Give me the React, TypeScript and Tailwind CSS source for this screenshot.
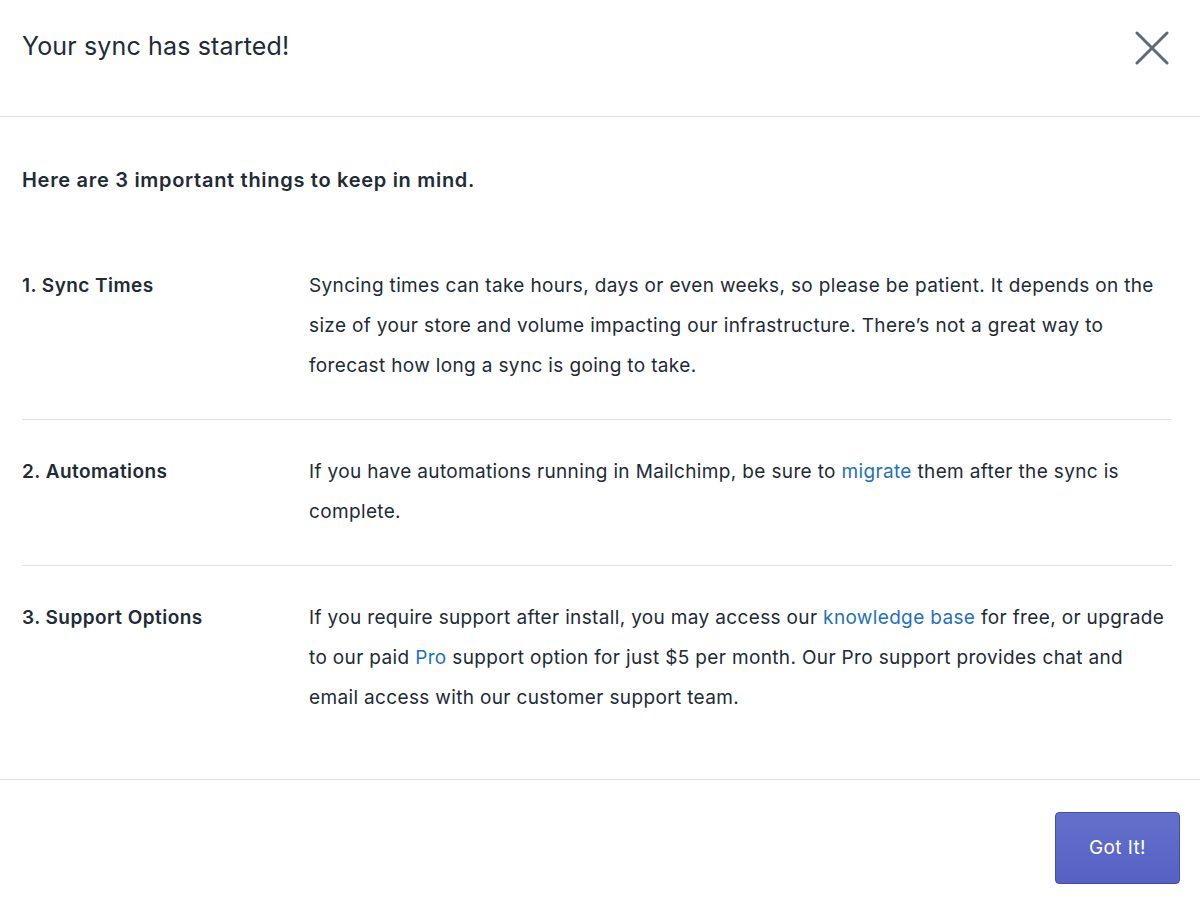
import React from "react";

const font = { fontFamily: "Inter, 'Noto Sans', sans-serif" };

function CloseIcon() {
  return (
    <svg width="34" height="34" viewBox="0 0 34 34" fill="none">
      <path d="M2 2L32 32M32 2L2 32" stroke="#5c6a7a" strokeWidth="3" strokeLinecap="round" />
    </svg>
  );
}

function Link({ children }: { children: React.ReactNode }) {
  return <a className="text-[#1f70c1] no-underline">{children}</a>;
}

type Item = { label: string; body: React.ReactNode };

const items: Item[] = [
  {
    label: "1. Sync Times",
    body: (
      <>
        Syncing times can take hours, days or even weeks, so please be patient. It depends on the size of your store
        and volume impacting our infrastructure. There’s not a great way to forecast how long a sync is going to take.
      </>
    ),
  },
  {
    label: "2. Automations",
    body: (
      <>
        If you have automations running in Mailchimp, be sure to <Link>migrate</Link> them after the sync is complete.
      </>
    ),
  },
  {
    label: "3. Support Options",
    body: (
      <>
        If you require support after install, you may access our <Link>knowledge base</Link> for free, or upgrade to
        our paid <Link>Pro</Link> support option for just $5 per month. Our Pro support provides chat and email access
        with our customer support team.
      </>
    ),
  },
];

export default function App() {
  return (
    <div className="w-[1200px] h-[901px] bg-white text-[#212b36] flex flex-col" style={font}>
      <header className="h-[117px] border-b border-[#dfe3e8] flex items-center justify-between pl-[22px] pr-[31px]">
        <h1 className="text-[25px] font-normal tracking-[0.15px] -mt-[23px]">Your sync has started!</h1>
        <button className="-mt-[21px]">
          <CloseIcon />
        </button>
      </header>

      <main className="px-[22px] pt-[43px] pb-[28px] border-b border-[#dfe3e8]">
        <p className="text-[20px] leading-[40px] font-semibold tracking-[0.7px] mb-[34px]">
          Here are 3 important things to keep in mind.
        </p>
        <div className="pr-[6px]">
          {items.map((it, i) => (
            <div
              key={it.label}
              className={
                "flex pt-[32px] pb-[33px] " + (i < items.length - 1 ? "border-b border-[#dfe3e8]" : "")
              }
            >
              <div className="w-[287px] shrink-0 text-[19px] leading-[40px] font-semibold tracking-[0.45px]">
                {it.label}
              </div>
              <div className="flex-1 text-[19px] leading-[40px] font-normal tracking-[0.35px]">{it.body}</div>
            </div>
          ))}
        </div>
      </main>

      <footer className="flex justify-end pt-[32px] pr-[20px]">
        <button className="w-[125px] h-[72px] rounded-[4px] border border-[#3f4eae] bg-gradient-to-b from-[#6370cb] to-[#5562c4] text-white text-[19px] tracking-[0.4px]">
          Got It!
        </button>
      </footer>
    </div>
  );
}
